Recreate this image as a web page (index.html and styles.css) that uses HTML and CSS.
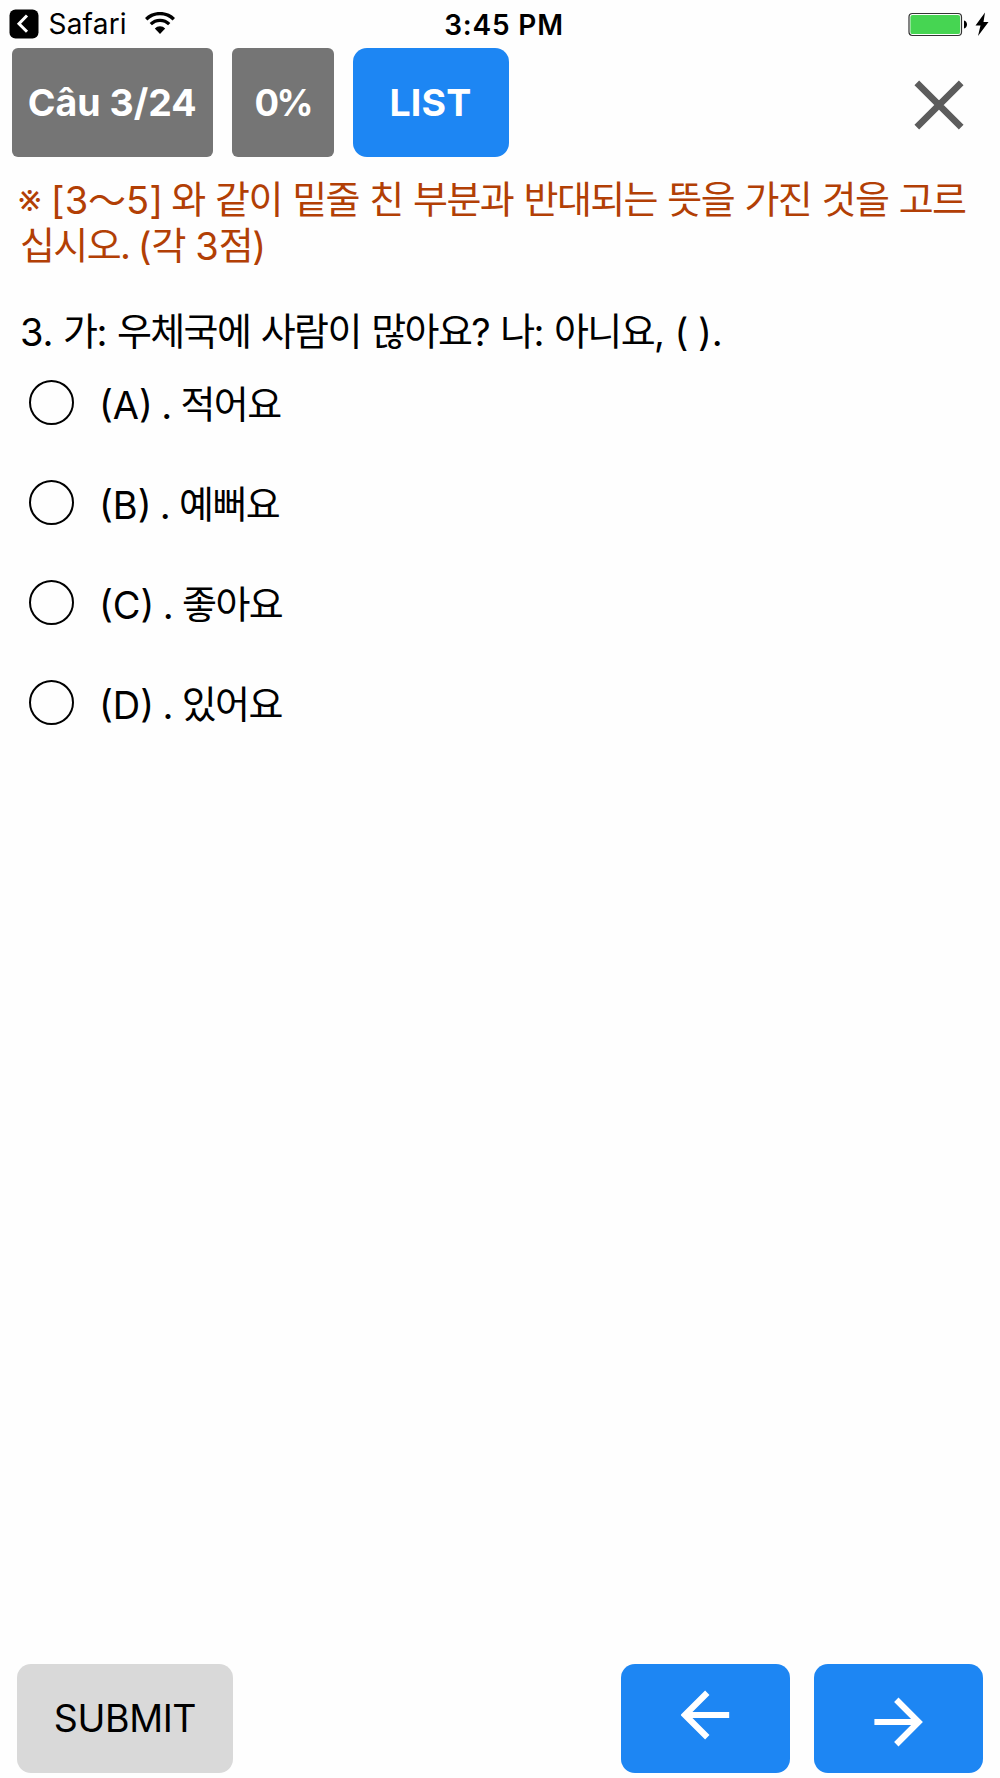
FILE: index.html
```html
<!DOCTYPE html>
<html lang="ko">
<head>
<meta charset="utf-8">
<title>Quiz</title>
<link rel="stylesheet" href="styles.css">
</head>
<body>
<div class="app">
  <header class="status">
    <div class="status-left">
      <svg class="back" width="30" height="30" viewBox="0 0 30 30"><rect x=".5" y=".5" width="29" height="29" rx="6" fill="#000"/><path d="M18 6.5 10 14.7 18 22.8" fill="none" stroke="#fff" stroke-width="3"/></svg>
      <span class="carrier">Safari</span>
      <svg class="wifi" width="30" height="22" viewBox="0 0 30 22"><g fill="none" stroke="#000"><path d="M1.2 7.2a19.8 19.8 0 0 1 27.6 0" stroke-width="3.4"/><path d="M5.8 12.1a13 13 0 0 1 18.4 0" stroke-width="3.2"/></g><path d="M15 22 9.8 16.5a7.3 7.3 0 0 1 10.4 0z"/></svg>
    </div>
    <span class="clock">3:45 PM</span>
    <svg class="battery" width="82" height="26" viewBox="0 0 82 26"><rect x="1" y="1.5" width="52.5" height="22" rx="3.5" fill="#fff" stroke="#333" stroke-width="1.2"/><rect x="2.4" y="2.9" width="49.7" height="19.2" rx="2.2" fill="#46d552"/><path d="M56 8.5c4 1 4 7 0 8z"/><path d="M77 .5 67.5 13.5h5L70 24 80.5 10h-5z"/></svg>
  </header>
  <nav class="top">
    <span class="tag count">Câu 3/24</span>
    <span class="tag percent">0%</span>
    <button class="btn list">LIST</button>
    <svg class="close" width="50" height="50" viewBox="0 0 50 50"><path d="M2.8 2.8 47.2 47.2M47.2 2.8 2.8 47.2" stroke="#5c5c5c" stroke-width="6.6"/></svg>
  </nav>
  <main class="quiz">
    <p class="direction"><span class="mark">※</span> <span class="range">[3～5]</span> <span class="ko">와 같이 밑줄 친 부분과 반대되는 뜻을 가진 것을 고르</span><br><span class="ko">십시오.</span> (<span class="ko">각 </span>3<span class="ko">점</span>)</p>
    <p class="question">3. <span class="ko">가</span>: <span class="ko">우체국에 사람이 많아요</span>? <span class="ko">나</span>: <span class="ko">아니요</span>, ( ).</p>
    <div class="options">
      <label class="option"><span class="radio"></span><span class="text">(A) . <span class="ko">적어요</span></span></label>
      <label class="option"><span class="radio"></span><span class="text">(B) . <span class="ko">예뻐요</span></span></label>
      <label class="option"><span class="radio"></span><span class="text">(C) . <span class="ko">좋아요</span></span></label>
      <label class="option"><span class="radio"></span><span class="text">(D) . <span class="ko">있어요</span></span></label>
    </div>
  </main>
  <footer class="bottom">
    <button class="btn submit">SUBMIT</button>
    <button class="btn arrow prev"><svg width="50" height="50" viewBox="0 0 50 50"><path d="M48.2 25H5M26.3 2.8 4 25 26.3 47.2" fill="none" stroke="#fff" stroke-width="6.2"/></svg></button>
    <button class="btn arrow next"><svg width="50" height="50" viewBox="0 0 50 50"><path d="M.4 25H43.5M22.3 2.8 44.5 25 22.3 47.2" fill="none" stroke="#fff" stroke-width="6.2"/></svg></button>
  </footer>
</div>
</body>
</html>
```

FILE: styles.css
```css
* { box-sizing: border-box; }
body { margin: 0; background: #fefefe; color: #000; font-family: Inter, "Noto Sans CJK KR", sans-serif; }
p { margin: 0; }
.app { width: 1000px; height: 1778px; display: flex; flex-direction: column; overflow: hidden; }

.status { height: 48px; display: grid; grid-template-columns: 1fr auto 1fr; align-items: start; padding: 0 10px 0 9px; }
.status-left { display: flex; align-items: flex-start; }
.back { margin-top: 9px; }
.carrier { margin-left: 9.5px; font-size: 28px; line-height: 48px; letter-spacing: 0.2px; }
.wifi { margin: 12px 0 0 18px; }
.clock { font-size: 28px; font-weight: 600; line-height: 51px; letter-spacing: 0.8px; margin-left: 9px; }
.battery { justify-self: end; margin-top: 12px; }

.top { height: 109px; display: flex; align-items: stretch; padding: 0 36px 0 12px; }
.tag, .btn { display: flex; align-items: center; justify-content: center; font-family: inherit; font-size: 37.5px; white-space: nowrap; }
.tag { background: #757575; color: #fff; font-weight: 700; border-radius: 6px; }
.count { width: 200.5px; }
.percent { width: 101.5px; margin-left: 19.5px; font-size: 36.5px; letter-spacing: -2.5px; }
.btn { border: 0; padding: 0; border-radius: 14px; background: #1d86f3; color: #fff; }
.list { width: 156px; margin-left: 19px; font-weight: 700; letter-spacing: 0.2px; }
.close { margin: 32px 0 0 auto; }

.quiz { flex: 1; padding: 20px 20px 0; font-size: 38px; line-height: 46px; white-space: nowrap; }
.direction, .text { word-spacing: -2.4px; }
.question { word-spacing: -1.2px; }
.quiz .ko { letter-spacing: -1.6px; word-spacing: 1.3px; line-height: 1; vertical-align: 1px; }
.mark { margin: 0 1px 0 -2px; font-size: 41px; line-height: 1; font-weight: 300; }
.direction { color: #b23f05; }
.question { margin-top: 40px; }
.options { margin-top: -3px; }
.option { height: 100px; display: flex; align-items: center; padding-left: 9px; }
.radio { width: 45px; height: 45px; border: 2px solid #000; border-radius: 50%; }
.text { margin-left: 25px; padding-top: 6px; }

.bottom { height: 114px; display: flex; align-items: flex-start; padding: 0 17px; }
.bottom .btn { height: 109px; }
.submit.btn { width: 216px; background: #d9d9d9; color: #000; letter-spacing: -0.4px; }
.arrow { width: 169px; }
.prev { margin-left: auto; padding-bottom: 7px; }
.next { margin-left: 24px; padding-top: 7px; }
```
